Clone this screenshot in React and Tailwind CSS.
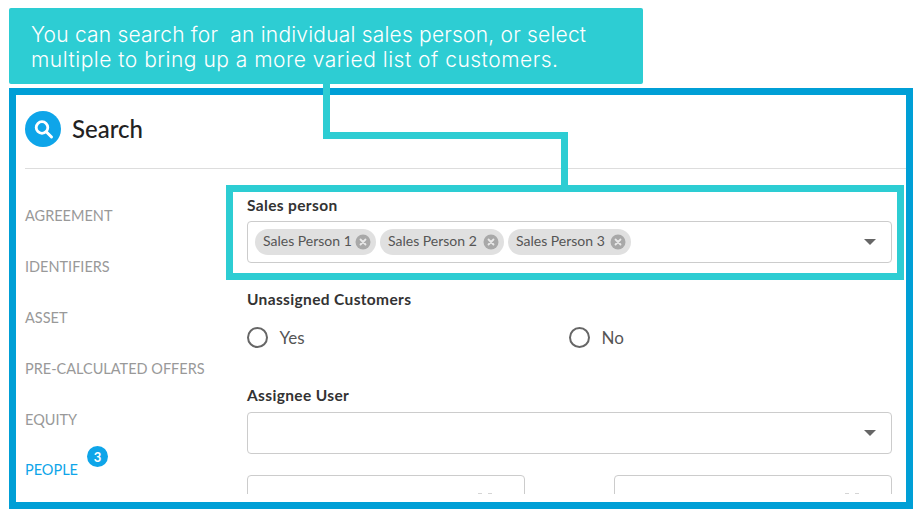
import React from "react";

const navItems = ["AGREEMENT", "IDENTIFIERS", "ASSET", "PRE-CALCULATED OFFERS", "EQUITY"];
const labelClass = "text-[15.5px] leading-[18px] tracking-[0.35px] font-bold text-[#333]";

function Caret() {
  return <div className="w-0 h-0 border-x-[6px] border-x-transparent border-t-[6px] border-t-[#666]" />;
}

function Chip({ label, className }) {
  return (
    <div className={`flex items-center justify-between h-[26px] pl-[8px] pr-[5px] rounded-full bg-[#e0e0e0] text-[14px] text-[#555] ${className}`}>
      <span className="whitespace-nowrap mt-[-3px]">{label}</span>
      <svg width="16" height="16" viewBox="0 0 16 16" className="shrink-0">
        <circle cx="8" cy="8" r="7.5" fill="#a8a8a8" />
        <path d="M5.5 5.5l5 5M10.5 5.5l-5 5" stroke="#e8e8e8" strokeWidth="1.8" strokeLinecap="round" />
      </svg>
    </div>
  );
}

function Radio({ label }) {
  return (
    <div className="flex items-center gap-[11.5px] h-[21px]">
      <div className="w-[21px] h-[21px] rounded-full border-2 border-[#666]" />
      <span className="text-[17px] leading-[21px] text-[#555]">{label}</span>
    </div>
  );
}

function ClippedField() {
  return (
    <div className="flex justify-end gap-[6px] w-[278px] h-[42px] rounded-[4px] border border-[#ccc] pr-[32px] pt-[17px]">
      <div className="w-[4px] h-[1px] bg-[#d5d5d5]" />
      <div className="w-[4px] h-[1px] bg-[#d5d5d5]" />
    </div>
  );
}

export default function App() {
  return (
    <div className="relative w-[919px] h-[511px] overflow-hidden bg-white font-['Lato',sans-serif]">
      <div className="ml-[9px] mt-[8px] w-[634px] h-[76px] rounded-[2px] bg-[#2dcdd3] pl-[22px] pt-[14px] text-[21px] leading-[25px] font-light text-white font-['Inter',sans-serif] whitespace-pre">
        <div className="tracking-[0.2px]">You can search for  an individual sales person, or select</div>
        <div className="tracking-[0.5px]">multiple to bring up a more varied list of customers.</div>
      </div>

      <div className="ml-[9px] mt-[4px] w-[904px] h-[421px] border-[7px] border-[#009fd6] pb-[8px]">
        <div className="h-full overflow-hidden">
          <div className="flex items-center h-[73px] pl-[9px] pb-[5px] gap-[11px]">
            <div className="flex items-center justify-center w-[36px] h-[36px] rounded-full bg-[#0ea5e9]">
              <svg width="22" height="22" viewBox="0 0 22 22" fill="none" stroke="white">
                <circle cx="10" cy="9.5" r="5.8" strokeWidth="2.8" />
                <path d="M14.5 14l5 5" strokeWidth="3" strokeLinecap="round" />
              </svg>
            </div>
            <span className="text-[24px] font-medium text-[#222]">Search</span>
          </div>
          <div className="ml-[9px] h-px bg-[#ddd]" />

          <div className="flex">
            <div className="w-[231px] pl-[9px] pt-[38px] shrink-0">
              {navItems.map((item) => (
                <div key={item} className="h-[51px] text-[14.5px] leading-[18px] text-[#999]">
                  {item}
                </div>
              ))}
              <div className="relative text-[14.5px] leading-[18px] text-[#0ea5e9] mt-[-1px]">
                PEOPLE
                <div className="absolute left-[62px] top-[-15px] flex items-center justify-center w-[21px] h-[21px] rounded-full bg-[#0ea5e9] text-[13px] font-bold text-white">
                  3
                </div>
              </div>
            </div>

            <div className="w-[645px] shrink-0 pt-[27px]">
              <div className={labelClass}>Sales person</div>
              <div className="flex items-center justify-between mt-[7px] h-[42px] rounded-[4px] border border-[#ccc] pl-[7px] pr-[15px]">
                <div className="flex gap-[4px]">
                  <Chip label="Sales Person 1" className="w-[121px]" />
                  <Chip label="Sales Person 2" className="w-[124px]" />
                  <Chip label="Sales Person 3" className="w-[123px]" />
                </div>
                <Caret />
              </div>

              <div className={`mt-[27px] ${labelClass}`}>Unassigned Customers</div>
              <div className="flex mt-[19px] h-[21px]">
                <div className="w-[322px]"><Radio label="Yes" /></div>
                <Radio label="No" />
              </div>

              <div className={`mt-[38px] ${labelClass}`}>Assignee User</div>
              <div className="flex items-center justify-end mt-[8px] h-[42px] rounded-[4px] border border-[#ccc] pr-[15px]">
                <Caret />
              </div>

              <div className="flex justify-between mt-[21px]">
                <ClippedField />
                <ClippedField />
              </div>
            </div>
          </div>
        </div>
      </div>

      {/* callout connector and highlight sit over the form */}
      <div className="absolute left-[323px] top-[84px] w-[7px] h-[55px] bg-[#2dcdd3]" />
      <div className="absolute left-[323px] top-[132px] w-[245px] h-[7px] bg-[#2dcdd3]" />
      <div className="absolute left-[561px] top-[132px] w-[7px] h-[53px] bg-[#2dcdd3]" />
      <div className="absolute left-[226px] top-[185px] w-[678px] h-[95px] border-[7px] border-[#2dcdd3]" />
    </div>
  );
}
